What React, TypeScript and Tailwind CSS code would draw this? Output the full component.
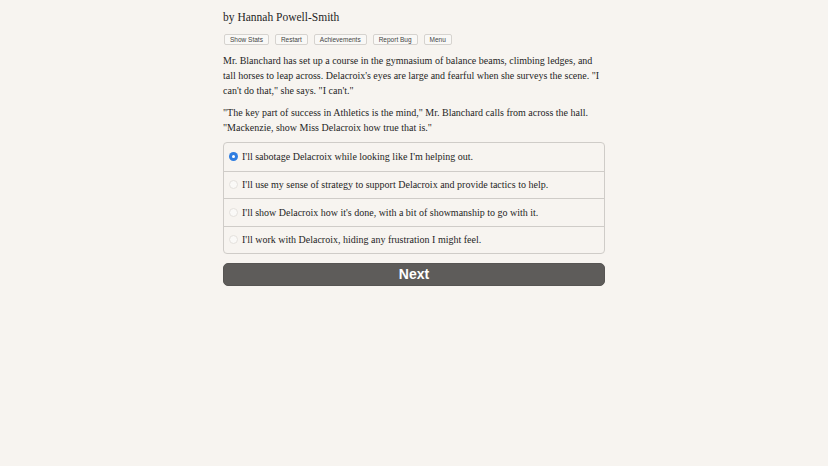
import React, { useState } from 'react';

const choices = [
  "I'll sabotage Delacroix while looking like I'm helping out.",
  "I'll use my sense of strategy to support Delacroix and provide tactics to help.",
  "I'll show Delacroix how it's done, with a bit of showmanship to go with it.",
  "I'll work with Delacroix, hiding any frustration I might feel.",
];

const buttons = ['Show Stats', 'Restart', 'Achievements', 'Report Bug', 'Menu'];

const App = () => {
  const [picked, setPicked] = useState(0);

  return (
    <div className="min-h-[466px] w-full bg-[#f7f4f0] text-[#1f1f1f]">
      <div className="mx-auto w-[382px] pt-[9px] font-['Liberation_Serif',serif]">
        {/* Author */}
        <p className="text-[11.5px] leading-[17px]">by Hannah Powell-Smith</p>

        {/* Top buttons */}
        <div className="mt-[8px] flex gap-[6px] pl-[1px]">
          {buttons.map((b) => (
            <button
              key={b}
              className="h-[11px] rounded-[2px] border border-[#d6d3cf] bg-[#f9f8f6] px-[5px] font-['Liberation_Sans',sans-serif] text-[6.5px] leading-[9px] text-[#444]"
            >
              {b}
            </button>
          ))}
        </div>

        {/* Story */}
        <div className="mt-[8px] text-[10px] leading-[15px]">
          <p>
            Mr. Blanchard has set up a course in the gymnasium of balance beams, climbing ledges, and
            tall horses to leap across. Delacroix's eyes are large and fearful when she surveys the
            scene. "I can't do that," she says. "I can't."
          </p>
          <p className="mt-[7px]">
            "The key part of success in Athletics is the mind," Mr. Blanchard calls from across the
            hall. "Mackenzie, show Miss Delacroix how true that is."
          </p>
        </div>

        {/* Choices */}
        <div className="mt-[7px] rounded-[4px] border border-[#cfccc8] bg-[#f7f4f0]">
          {choices.map((c, i) => (
            <label
              key={c}
              className={`flex h-[27.5px] cursor-pointer items-center gap-[4px] px-[5px] text-[10px] ${
                i > 0 ? 'border-t border-[#cfccc8]' : ''
              }`}
              onClick={() => setPicked(i)}
            >
              {picked === i ? (
                <span className="flex h-[9px] w-[9px] items-center justify-center rounded-full bg-[#2f7de1]">
                  <span className="h-[3px] w-[3px] rounded-full bg-white" />
                </span>
              ) : (
                <span className="h-[9px] w-[9px] rounded-full border border-[#e4e1dd] bg-[#faf9f7]" />
              )}
              <span>{c}</span>
            </label>
          ))}
        </div>

        {/* Next */}
        <button className="mt-[9px] flex h-[23px] w-full items-center justify-center rounded-[5px] border border-[#575553] bg-[#5e5c5a] font-['Liberation_Sans',sans-serif] text-[14px] font-bold text-white">
          Next
        </button>
      </div>
    </div>
  );
};

export default App;
